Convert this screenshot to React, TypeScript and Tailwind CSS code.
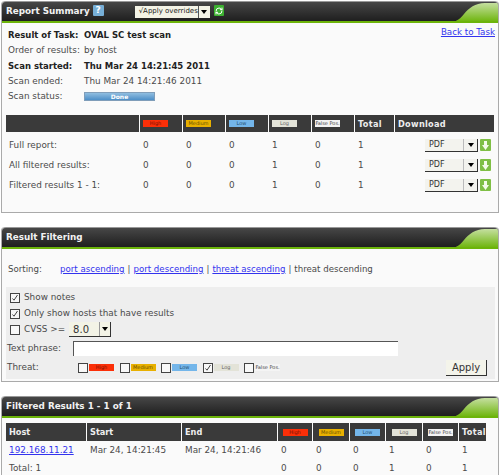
import { RefreshCw } from "lucide-react";

const font = "font-['DejaVu_Sans',sans-serif]";

function PanelHeader({ title, children }: { title: string; children?: React.ReactNode }) {
  return (
    <div className="relative flex h-[22px] items-center overflow-hidden rounded-t-[4px] border-t border-t-[#999999] border-b-[2px] border-b-[#6cb40a] bg-gradient-to-b from-[#474747] to-[#1f1f1f] pl-[4px]">
      <span className="whitespace-nowrap text-[8.8px] font-bold text-[#f2f2f2]">{title}</span>
      {children}
      <svg className="absolute right-0 top-0" width="49" height="20" viewBox="0 0 49 20">
        <defs>
          <linearGradient id="swoosh" x1="0" y1="0" x2="0" y2="1">
            <stop offset="0" stopColor="#c5dfa0" />
            <stop offset="1" stopColor="#6cb40a" />
          </linearGradient>
        </defs>
        <path d="M0 20 C8 20 11 17 15 12 C20 6 26 1 36 1 L49 1 L49 20 Z" fill="url(#swoosh)" />
      </svg>
    </div>
  );
}

function Swatch({ kind }: { kind: string }) {
  const styles: Record<string, string> = {
    High: "bg-[#fb2f08] text-[#7a1204]",
    Medium: "bg-[#e8b000] text-[#6a5000]",
    Low: "bg-[#74b6ea] text-[#234f73]",
    Log: "bg-[#e3e3d8] text-[#666666]",
    "False Pos.": "bg-[#f4f4f4] text-[#444444]",
  };
  return (
    <span className={`inline-flex h-[7px] w-[25px] items-center justify-center whitespace-nowrap text-[5px] leading-none ${styles[kind]}`}>
      {kind}
    </span>
  );
}

function Pdf() {
  return (
    <div className="flex items-center justify-end gap-[2px] pr-[3px]">
      <div className="flex h-[13px] w-[53px] items-center border-b border-r border-b-[#333333] border-r-[#333333] bg-[#f3f3ee]">
        <span className="flex-1 pl-[4px] text-[8px] text-[#333333]">PDF</span>
        <span className="flex h-full w-[14px] items-center justify-center border-l border-l-[#bbbbbb]">
          <span className="h-0 w-0 border-x-[3px] border-t-[4px] border-x-transparent border-t-black" />
        </span>
      </div>
      <span className="flex h-[12px] w-[11px] items-center justify-center rounded-[1px] bg-[#7fbf45]">
        <svg width="7" height="9" viewBox="0 0 7 9"><path d="M2 0h3v4h2L3.5 9 0 4h2z" fill="#f4fbe8" /></svg>
      </span>
    </div>
  );
}

const summaryCols = "grid-cols-[133px_42px_42px_42px_42px_42px_39px_1fr]";
const severity = ["High", "Medium", "Low", "Log", "False Pos."];

function SummaryRow({ label }: { label: string }) {
  return (
    <div className={`grid ${summaryCols} h-[20px] items-center gap-x-px`}>
      <span className="pl-[3px]">{label}</span>
      {["0", "0", "0", "1", "0", "1"].map((v, i) => (
        <span key={i} className="pl-[3px]">{v}</span>
      ))}
      <Pdf />
    </div>
  );
}

function Check({ on }: { on?: boolean }) {
  return (
    <span className="flex h-[10px] w-[10px] shrink-0 items-center justify-center border border-[#444444] bg-[#f8f8f8]">
      {on && (
        <svg width="8" height="8" viewBox="0 0 8 8"><path d="M1.5 4.5 3 6.2 6.5 1" fill="none" stroke="#444" strokeWidth="1" /></svg>
      )}
    </span>
  );
}

function Cell({ children, className = "" }: { children?: React.ReactNode; className?: string }) {
  return <div className={`flex items-center bg-[#3a3a3a] ${className}`}>{children}</div>;
}

export default function App() {
  return (
    <div className={`${font} h-[475px] w-[500px] overflow-hidden bg-white pl-[1px] pt-[1px] text-[8.85px] text-[#4a4a4a]`}>
      {/* REPORT SUMMARY */}
      <section className="h-[212px] w-[498px] rounded-t-[4px] border-x border-b border-[#aaaaaa] bg-[#fafafa]">
        <PanelHeader title="Report Summary">
          <span className="mb-[2px] ml-[3px] flex h-[11px] w-[11px] items-center justify-center rounded-[1px] bg-[#76aed6] text-[9px] font-bold leading-none text-white">?</span>
          <div className="ml-[31px] flex h-[12px] w-[75px] items-center bg-[#f3f3e6] pl-[4px] text-[7px] text-[#222222]">
            <span className="flex-1 whitespace-nowrap">√Apply overrides</span>
            <span className="flex h-full w-[12px] items-center justify-center border-l border-l-[#555555]">
              <span className="h-0 w-0 border-x-[3px] border-t-[4px] border-x-transparent border-t-black" />
            </span>
          </div>
          <span className="mb-[2px] ml-[4px] flex h-[11px] w-[10px] items-center justify-center rounded-[1px] bg-[#3cb030] text-white">
            <RefreshCw size={8} strokeWidth={3} />
          </span>
        </PanelHeader>

        <div className="relative px-[4px] pt-[5px]">
          <a className="absolute right-[3px] top-[3px] text-[8.7px] text-[#3333ee] underline">Back to Task</a>
          <div className="grid auto-rows-[15.3px] grid-cols-[76px_1fr] items-center pl-[2px]">
            <b className="whitespace-nowrap text-[8.5px] text-[#222222]">Result of Task:</b>
            <b className="text-[8.5px] text-[#222222]">OVAL SC test scan</b>
            <span className="whitespace-nowrap">Order of results:</span>
            <span>by host</span>
            <b className="text-[8.5px] text-[#222222]">Scan started:</b>
            <b className="text-[8.5px] text-[#222222]">Thu Mar 24 14:21:45 2011</b>
            <span>Scan ended:</span>
            <span>Thu Mar 24 14:21:46 2011</span>
            <span>Scan status:</span>
            <span className="flex h-[9px] w-[71px] items-center justify-center border border-[#7f9db9] bg-gradient-to-b from-[#8fbde0] to-[#4d8fc7] text-[6px] font-bold text-white">Done</span>
          </div>

          <div className={`mt-[11px] grid h-[17px] w-[488px] ${summaryCols} gap-x-px`}>
            <Cell />
            {severity.map((k) => (
              <Cell key={k} className="pl-[3px]"><Swatch kind={k} /></Cell>
            ))}
            <Cell className="pl-[3px] text-[8.2px] font-bold tracking-[0.3px] text-[#eeeeee]">Total</Cell>
            <Cell className="pl-[3px] text-[8.2px] font-bold tracking-[0.3px] text-[#eeeeee]">Download</Cell>
          </div>
          <div className="w-[488px] pt-[3px]">
            <SummaryRow label="Full report:" />
            <SummaryRow label="All filtered results:" />
            <SummaryRow label="Filtered results 1 - 1:" />
          </div>
        </div>
      </section>

      {/* RESULT FILTERING */}
      <section className="mt-[14px] h-[155px] w-[498px] rounded-t-[4px] border-x border-b border-[#aaaaaa] bg-[#fafafa]">
        <PanelHeader title="Result Filtering" />
        <div className="flex h-[38px] items-center pl-[6px] pt-[2px] text-[8.65px]">
          <span className="w-[52px]">Sorting:</span>
          <a className="text-[#3333ee] underline">port ascending</a>
          <span className="mx-[3px]">|</span>
          <a className="text-[#3333ee] underline">port descending</a>
          <span className="mx-[3px]">|</span>
          <a className="text-[#3333ee] underline">threat ascending</a>
          <span className="mx-[3px]">|</span>
          <span>threat descending</span>
        </div>
        <div className="mx-[4px] h-[92px] w-[489px] bg-[#eeeeee] pl-[4px]">
          <div className="flex h-[17px] items-center gap-[4px] pt-[4px]"><Check on /><span>Show notes</span></div>
          <div className="flex h-[17px] items-center gap-[4px] pt-[2px]"><Check on /><span>Only show hosts that have results</span></div>
          <div className="flex h-[17px] items-center gap-[4px]">
            <Check />
            <span>CVSS &gt;=</span>
            <div className="flex h-[15px] w-[42px] items-center border-b border-r border-[#333333] bg-[#f3f3e6] text-[10px] text-[#333333]">
              <span className="flex-1 pl-[4px]">8.0</span>
              <span className="flex h-full w-[11px] items-center justify-center border-l border-l-[#999999]">
                <span className="h-0 w-0 border-x-[3px] border-t-[4px] border-x-transparent border-t-black" />
              </span>
            </div>
          </div>
          <div className="-ml-[3px] flex h-[20px] items-center pt-[1px]">
            <span className="w-[66px]">Text phrase:</span>
            <span className="h-[15px] w-[325px] border-l border-t border-[#555555] bg-white" />
          </div>
          <div className="-ml-[3px] flex h-[19px] items-center">
            <span className="w-[71px]">Threat:</span>
            {severity.map((k, i) => (
              <span key={k} className="mr-[5.5px] flex items-center gap-[1px]">
                <Check on={i === 3} />
                <Swatch kind={k} />
              </span>
            ))}
            <button className="ml-auto mr-[8px] h-[16px] w-[41px] border-b border-r border-[#333333] bg-[#f4f4ea] text-[10px] text-[#333333]">Apply</button>
          </div>
        </div>
      </section>

      {/* FILTERED RESULTS */}
      <section className="mt-[14px] w-[498px] rounded-t-[4px] border-x border-[#aaaaaa] bg-[#fafafa]">
        <PanelHeader title="Filtered Results 1 - 1 of 1" />
        <div className="px-[4px] pb-[10px] pt-[5px]">
          <div className="grid grid-cols-[80px_94px_95px_34px_36px_35px_36px_35px_27px] gap-x-px">
            {["Host", "Start", "End"].map((h) => (
              <Cell key={h} className="h-[18px] pl-[3px] text-[8.2px] font-bold text-[#eeeeee]">{h}</Cell>
            ))}
            {severity.map((k) => (
              <Cell key={k} className="h-[18px] justify-center"><Swatch kind={k} /></Cell>
            ))}
            <Cell className="h-[18px] pl-[3px] text-[8.2px] font-bold tracking-[0.3px] text-[#eeeeee]">Total</Cell>

            <a className="flex h-[18px] items-center pl-[3px] pt-[1px] text-[#3333ee] underline">192.168.11.21</a>
            <span className="flex items-center pl-[3px] pt-[1px]">Mar 24, 14:21:45</span>
            <span className="flex items-center pl-[3px] pt-[1px]">Mar 24, 14:21:46</span>
            {["0", "0", "0", "1", "0", "1"].map((v, i) => <span key={i} className="flex items-center pl-[3px] pt-[1px]">{v}</span>)}

            <span className="col-span-3 flex h-[18px] items-center pl-[3px] pt-[1px]">Total: 1</span>
            {["0", "0", "0", "1", "0", "1"].map((v, i) => <span key={i} className="flex items-center pl-[3px] pt-[1px]">{v}</span>)}
          </div>
        </div>
      </section>
    </div>
  );
}
